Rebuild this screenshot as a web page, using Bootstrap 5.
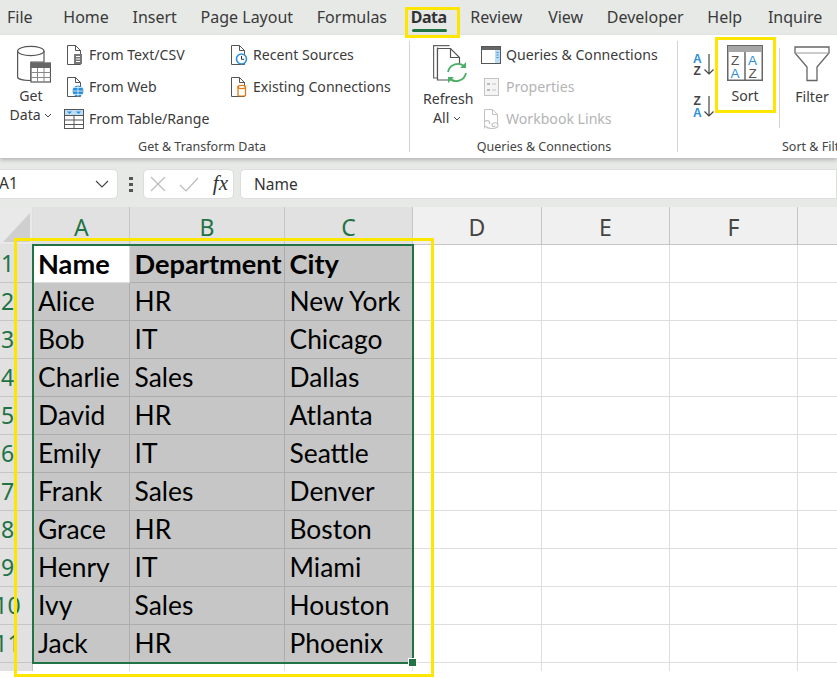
<!DOCTYPE html>
<html lang="en">
<head>
<meta charset="utf-8">
<title>Excel sort</title>
<link href="https://cdn.jsdelivr.net/npm/bootstrap@5.3.0/dist/css/bootstrap.min.css" rel="stylesheet">
<style>
html,body{margin:0;overflow:hidden;width:837px;height:678px;background:#fff}
body{font-family:"Noto Sans","Open Sans",sans-serif;color:#333}
.stage{width:837px;height:678px;overflow:hidden;position:relative}
.tabs{height:35px;background:#e6e9e6;padding-left:7px;font-size:16px;color:#3a3a3a;gap:23.7px}
.tabs span{line-height:35px;white-space:nowrap;position:relative}
.tabs .first{margin-right:7px}
.tabs .wider{margin-right:2px}
.tabs .on{font-weight:700;color:#333;letter-spacing:-.5px}
.tabs .on::after{content:"";position:absolute;left:1px;right:0;bottom:3px;height:3px;background:#217346;border-radius:2px}
.ribbon{height:123px;background:#fff;box-shadow:0 2px 4px rgba(0,0,0,.22);position:relative;z-index:2;font-size:14.1px;color:#3b3b3b}
.grp{position:relative;flex:none;height:123px}
.g1{width:410px}.g2{width:268px}.g3{width:159px;overflow:hidden}
.sep{position:absolute;right:0;top:6px;height:111px;width:1px;background:#d4d4d4}
.glabel{position:absolute;top:104px;left:0;right:0;text-align:center;font-size:12.5px;line-height:16px;color:#444;white-space:nowrap}
.gl1{padding-right:6px}
.gl3{left:104px;right:auto}
.big{flex:none;text-align:center;line-height:19px;white-space:nowrap}
.big svg{display:block;margin:0 auto 5px}
.big svg.chev{display:inline;margin:0}
.small-col{flex:none;gap:12px}
.sm{height:20px;line-height:20px;white-space:nowrap;gap:5px}
.sm svg{flex:none}
.dim{color:#b4b4b4}
.g1-inner{padding:10px 0 0 7px}
.bigw1{width:48px}.col-a{margin-left:9px;width:164px}
.big svg.ic-get{margin:0 0 3px 10px}
.g2-inner{padding:10px 0 0 13px}.bigw2{width:48px}.col-b{margin-left:10px}
.big svg.ic-ref{margin:0 0 4px 10px}
.az{margin:17px 0 0 15px;gap:18px;flex:none}
.sortb{width:60px;margin:10px 0 0 0}
.vline{width:1px;height:80px;background:#d4d4d4;margin:13px 0 0 4px;flex:none}
.filt{width:52px;margin:11px 0 0 6px;flex:none}
.fbar{height:49px;background:#e6e9e6;padding-top:11px;font-size:15.5px;color:#333}
.namebox{width:124px;height:30px;margin-left:-6px;padding-left:4px;background:#fff;border:1px solid #dcdedc;border-radius:0 5px 5px 0;flex:none}
.dots{width:25px;height:30px;flex:none;gap:3px}
.dots i{display:block;width:4px;height:3px;background:#555}
.fxbox{width:91px;height:30px;background:#fff;border:1px solid #dcdedc;border-radius:5px;flex:none;padding:0 5px 0 6px}
.fx{font-family:"Liberation Serif",serif;font-style:italic;font-size:21px;color:#333}
.finput{height:30px;margin-left:6px;background:#fff;border:1px solid #dcdedc;border-radius:5px 0 0 5px;flex:1;padding-left:13px;line-height:28px}
.sheetwrap{position:relative}
.sheet{display:grid;grid-template-columns:33px 96.5px 155px 128px 129px 128px 128px 40px;grid-template-rows:38px repeat(11,38px) 8px;font-family:Lato,sans-serif;font-size:26.4px;color:#000}
.sheet>div{border-right:1px solid #dedede;border-bottom:1px solid #dedede;padding-left:5px;display:flex;align-items:center;white-space:nowrap;line-height:1}
.sheet>.hd{background:#f0f0f0;border-color:#c6c6c6;justify-content:center;padding:3px 0 0 1px;color:#444;font-family:"Noto Sans",sans-serif;font-size:23px}
.sheet>.hs{background:#e1e1e1;color:#217346}
.sheet>.cnr{background:#e9e9e9;position:relative;padding:0}
.cnr svg{position:absolute;left:0;top:0}
.sheet>.rn{background:#e1e1e1;border-color:#c6c6c6;color:#217346;padding:0 17px 0 0;justify-content:center;font-family:"Noto Sans",sans-serif;font-size:23px;overflow:hidden}
.sheet>.rn span{flex:none}
.sheet>.s{background:#c6c6c6;border-color:#adadad}
.sheet>.w{background:#fff}
.sheet>.b{font-weight:700;font-size:27.2px}
.sheet>.end{border-bottom:0}
.selbox{position:absolute;left:32px;top:37px;width:382px;height:420px;border:2px solid #217346;pointer-events:none}
.handle{position:absolute;right:-5px;bottom:-5px;width:7px;height:7px;background:#217346;border:1px solid #fff;box-sizing:content-box}
.ybox{position:absolute;border:3px solid #ffe600;pointer-events:none;z-index:5}
.y1{left:14px;top:238px;width:420px;height:439px}
.y2{left:405px;top:7px;width:55px;height:31px}
.y3{left:715px;top:37px;width:61px;height:76px}
</style>
</head>
<body>
<div class="stage">
  <div class="tabs d-flex">
    <span class="first">File</span><span>Home</span><span>Insert</span><span>Page Layout</span><span>Formulas</span><span class="on">Data</span><span class="wider">Review</span><span>View</span><span>Developer</span><span class="wider">Help</span><span>Inquire</span>
  </div>

  <div class="ribbon d-flex">
    <div class="grp g1">
      <div class="d-flex g1-inner">
        <div class="big bigw1">
          <svg class="ic-get" width="34" height="38" viewBox="0 0 34 38"><path d="M.6 6v26c0 2 6 3.500 13.400 3.500V17h13V6" fill="#fff" stroke="#555" stroke-width="1.200"/><ellipse cx="13.800" cy="6" rx="13.200" ry="4.600" fill="#fff" stroke="#555" stroke-width="1.200"/><rect x="14" y="18" width="19.500" height="19" fill="#fff" stroke="#555" stroke-width="1.200"/><rect x="14" y="18" width="19.500" height="5" fill="#666"/><path d="M20.500 23v14M27 23v14M14 27.500h19.500M14 32.500h19.500" stroke="#888"/></svg>
          <div>Get</div><div>Data <svg class="chev" width="8" height="6" viewBox="0 0 8 6"><path d="M1 1l3 3 3-3" fill="none" stroke="#444"/></svg></div>
        </div>
        <div class="d-flex flex-column small-col col-a">
          <div class="sm d-flex"><svg width="20" height="20" viewBox="0 0 20 20"><path d="M3.500.5h8l5 5v14h-13z" fill="#fff" stroke="#555"/><path d="M11.500.5v5h5" fill="none" stroke="#555"/><rect x="10" y="9" width="8" height="10" fill="#777"/><path d="M12 11.500h4M12 14h4M12 16.500h4" stroke="#fff"/></svg><span>From Text/CSV</span></div>
          <div class="sm d-flex"><svg width="20" height="20" viewBox="0 0 20 20"><path d="M3.500.5h8l5 5v14h-13z" fill="#fff" stroke="#555"/><path d="M11.500.5v5h5" fill="none" stroke="#555"/><circle cx="14" cy="14" r="5.500" fill="#2f8fd8"/><path d="M8.500 14h11M14 8.500v11M10 10.500h8M10 17.500h8" stroke="#fff" stroke-width=".7"/></svg><span>From Web</span></div>
          <div class="sm d-flex"><svg width="20" height="20" viewBox="0 0 20 20"><rect x=".5" y=".5" width="19" height="19" fill="#fff" stroke="#555"/><rect x="1" y="1" width="18" height="5.500" fill="#bcdcf4"/><path d="M3 2.500h5l-2.500 2.500zM12 2.500h5l-2.500 2.500z" fill="#2f8fd8"/><path d="M.5 6.500h19M.5 11h19M.5 15.500h19M10 6.500v13" stroke="#555"/></svg><span>From Table/Range</span></div>
        </div>
        <div class="d-flex flex-column small-col">
          <div class="sm d-flex"><svg width="20" height="20" viewBox="0 0 20 20"><path d="M3.500.5h8l5 5v14h-13z" fill="#fff" stroke="#555"/><path d="M11.500.5v5h5" fill="none" stroke="#555"/><circle cx="13.500" cy="14" r="5" fill="#fff" stroke="#2f8fd8" stroke-width="1.600"/><path d="M13.500 11v3.300h2.700" fill="none" stroke="#333"/></svg><span>Recent Sources</span></div>
          <div class="sm d-flex"><svg width="20" height="20" viewBox="0 0 20 20"><path d="M3.500.5h8l5 5v14h-13z" fill="#fff" stroke="#555"/><path d="M11.500.5v5h5" fill="none" stroke="#555"/><path d="M10 10v8.500c0 .6 7.500.6 7.500 0V10z" fill="#fff" stroke="#e47911" stroke-width="1.300"/><ellipse cx="13.750" cy="10" rx="3.750" ry="1.600" fill="#fff" stroke="#e47911" stroke-width="1.300"/></svg><span>Existing Connections</span></div>
        </div>
      </div>
      <div class="glabel gl1">Get &amp; Transform Data</div>
      <div class="sep"></div>
    </div>

    <div class="grp g2">
      <div class="d-flex g2-inner">
        <div class="big bigw2">
          <svg class="ic-ref" width="35" height="40" viewBox="0 0 35 40"><path d="M4.500 2.500V33H.6V.6h16" fill="none" stroke="#666" stroke-width="1.200"/><path d="M4.500 3.500h13l9 9V20M16 35H4.500V3.500" fill="#fff" stroke="#555" stroke-width="1.200"/><path d="M17.500 3.500v9h9" fill="none" stroke="#555" stroke-width="1.200"/><path d="M15 27a10 10 0 0 1 17-5M33 28a10 10 0 0 1-17 5" fill="none" stroke="#4caf66" stroke-width="1.800"/><path d="M33 17v6h-6zM15 38v-6h6z" fill="#4caf66"/></svg>
          <div>Refresh</div><div>All <svg class="chev" width="8" height="6" viewBox="0 0 8 6"><path d="M1 1l3 3 3-3" fill="none" stroke="#444"/></svg></div>
        </div>
        <div class="d-flex flex-column small-col col-b">
          <div class="sm d-flex"><svg width="20" height="20" viewBox="0 0 20 20"><rect x=".5" y="1.500" width="19" height="17" fill="#fff" stroke="#555"/><rect x="1" y="2" width="18" height="3" fill="#666"/><rect x="14" y="5" width="5" height="13" fill="#bcdcf4"/><path d="M15.500 7.500h2M15.500 10h2M15.500 12.500h2" stroke="#2f8fd8"/></svg><span>Queries &amp; Connections</span></div>
          <div class="sm d-flex dim"><svg width="20" height="20" viewBox="0 0 20 20"><rect x="3.500" y="1.500" width="14" height="17" fill="#f4f4f4" stroke="#c4c4c4"/><path d="M6 6h3v2H6zM6 12h3v2H6z" fill="#bbb"/><path d="M11 7h4M11 13h4" stroke="#c4c4c4"/></svg><span>Properties</span></div>
          <div class="sm d-flex dim"><svg width="20" height="20" viewBox="0 0 20 20"><path d="M3.500.5h8l5 5v9M3.500 19.500V.5" fill="#fff" stroke="#c4c4c4"/><path d="M11.500.5v5h5" fill="none" stroke="#c4c4c4"/><path d="M4 17c4 4 13 3 13-1 0-3-6-3-6 0 0 2 3 2 3 .5M3 13c4-3 7 0 5 2" fill="none" stroke="#c4c4c4" stroke-width="1.200"/></svg><span>Workbook Links</span></div>
        </div>
      </div>
      <div class="glabel">Queries &amp; Connections</div>
      <div class="sep"></div>
    </div>

    <div class="grp g3">
      <div class="d-flex">
        <div class="d-flex flex-column az">
          <svg width="22" height="24" viewBox="0 0 22 24"><text x="0" y="11" font-family="Liberation Sans" font-weight="700" font-size="12" fill="#2f8fd8">A</text><text x="0.500" y="22.500" font-family="Liberation Sans" font-weight="700" font-size="12" fill="#444">Z</text><path d="M16 2v20M11.500 17.500l4.500 4.500 4.500-4.500" fill="none" stroke="#444" stroke-width="1.200"/></svg>
          <svg width="22" height="24" viewBox="0 0 22 24"><text x="0.500" y="11" font-family="Liberation Sans" font-weight="700" font-size="12" fill="#444">Z</text><text x="0" y="22.500" font-family="Liberation Sans" font-weight="700" font-size="12" fill="#2f8fd8">A</text><path d="M16 2v20M11.500 17.500l4.500 4.500 4.500-4.500" fill="none" stroke="#444" stroke-width="1.200"/></svg>
        </div>
        <div class="big sortb">
          <svg width="36" height="36" viewBox="0 0 36 36"><rect x=".75" y=".75" width="34.500" height="34.500" fill="#fff" stroke="#666" stroke-width="1.500"/><rect x="1" y="1" width="34" height="6" fill="#a6a6a6"/><path d="M18 7v28" stroke="#666" stroke-width="1.500"/><text x="4" y="20" font-family="Liberation Sans" font-size="13.500" fill="#555">Z</text><text x="3.500" y="32.500" font-family="Liberation Sans" font-size="13.500" fill="#2f8fd8">A</text><text x="21" y="20" font-family="Liberation Sans" font-size="13.500" fill="#2f8fd8">A</text><text x="21.500" y="32.500" font-family="Liberation Sans" font-size="13.500" fill="#555">Z</text></svg>
          <div>Sort</div>
        </div>
        <div class="vline"></div>
        <div class="big filt">
          <svg width="36" height="36" viewBox="0 0 36 36"><path d="M1 1h34v6L23 21v13.500h-10V21L1 7z" fill="#fff" stroke="#666" stroke-width="1.300"/><path d="M1 7h34" stroke="#999"/></svg>
          <div>Filter</div>
        </div>
      </div>
      <div class="glabel gl3">Sort &amp; Filter</div>
    </div>
  </div>

  <div class="fbar d-flex">
    <div class="namebox d-flex align-items-center justify-content-between"><span>A1</span><svg class="me-2" width="14" height="8" viewBox="0 0 14 8"><path d="M1 1l6 6 6-6" fill="none" stroke="#444" stroke-width="1.100"/></svg></div>
    <div class="dots d-flex flex-column align-items-center justify-content-center"><i></i><i></i><i></i></div>
    <div class="fxbox d-flex align-items-center justify-content-between">
      <svg width="16" height="16" viewBox="0 0 16 16"><path d="M1 1l14 14M15 1L1 15" stroke="#bbb" stroke-width="1.200"/></svg>
      <svg width="20" height="15" viewBox="0 0 20 15"><path d="M1 8l6 6L19 1" fill="none" stroke="#bbb" stroke-width="1.200"/></svg>
      <span class="fx">fx</span>
    </div>
    <div class="finput">Name</div>
  </div>

  <div class="sheetwrap">
    <div class="sheet">
      <div class="cnr"><svg width="33" height="37" viewBox="0 0 33 37"><path d="M30 6v29H3z" fill="#cfcfcf"/></svg></div>
      <div class="hd hs">A</div><div class="hd hs">B</div><div class="hd hs">C</div><div class="hd">D</div><div class="hd">E</div><div class="hd">F</div><div class="hd"></div>

      <div class="rn"><span>1</span></div><div class="w b">Name</div><div class="s b">Department</div><div class="s b">City</div><div></div><div></div><div></div><div></div>
      <div class="rn"><span>2</span></div><div class="s">Alice</div><div class="s">HR</div><div class="s">New York</div><div></div><div></div><div></div><div></div>
      <div class="rn"><span>3</span></div><div class="s">Bob</div><div class="s">IT</div><div class="s">Chicago</div><div></div><div></div><div></div><div></div>
      <div class="rn"><span>4</span></div><div class="s">Charlie</div><div class="s">Sales</div><div class="s">Dallas</div><div></div><div></div><div></div><div></div>
      <div class="rn"><span>5</span></div><div class="s">David</div><div class="s">HR</div><div class="s">Atlanta</div><div></div><div></div><div></div><div></div>
      <div class="rn"><span>6</span></div><div class="s">Emily</div><div class="s">IT</div><div class="s">Seattle</div><div></div><div></div><div></div><div></div>
      <div class="rn"><span>7</span></div><div class="s">Frank</div><div class="s">Sales</div><div class="s">Denver</div><div></div><div></div><div></div><div></div>
      <div class="rn"><span>8</span></div><div class="s">Grace</div><div class="s">HR</div><div class="s">Boston</div><div></div><div></div><div></div><div></div>
      <div class="rn"><span>9</span></div><div class="s">Henry</div><div class="s">IT</div><div class="s">Miami</div><div></div><div></div><div></div><div></div>
      <div class="rn"><span>10</span></div><div class="s">Ivy</div><div class="s">Sales</div><div class="s">Houston</div><div></div><div></div><div></div><div></div>
      <div class="rn"><span>11</span></div><div class="s">Jack</div><div class="s">HR</div><div class="s">Phoenix</div><div></div><div></div><div></div><div></div>
      <div class="rn end"></div><div class="end"></div><div class="end"></div><div class="end"></div><div class="end"></div><div class="end"></div><div class="end"></div><div class="end"></div>
    </div>
    <div class="selbox"><div class="handle"></div></div>
  </div>

  <div class="ybox y1"></div>
  <div class="ybox y2"></div>
  <div class="ybox y3"></div>
</div>
</body>
</html>
